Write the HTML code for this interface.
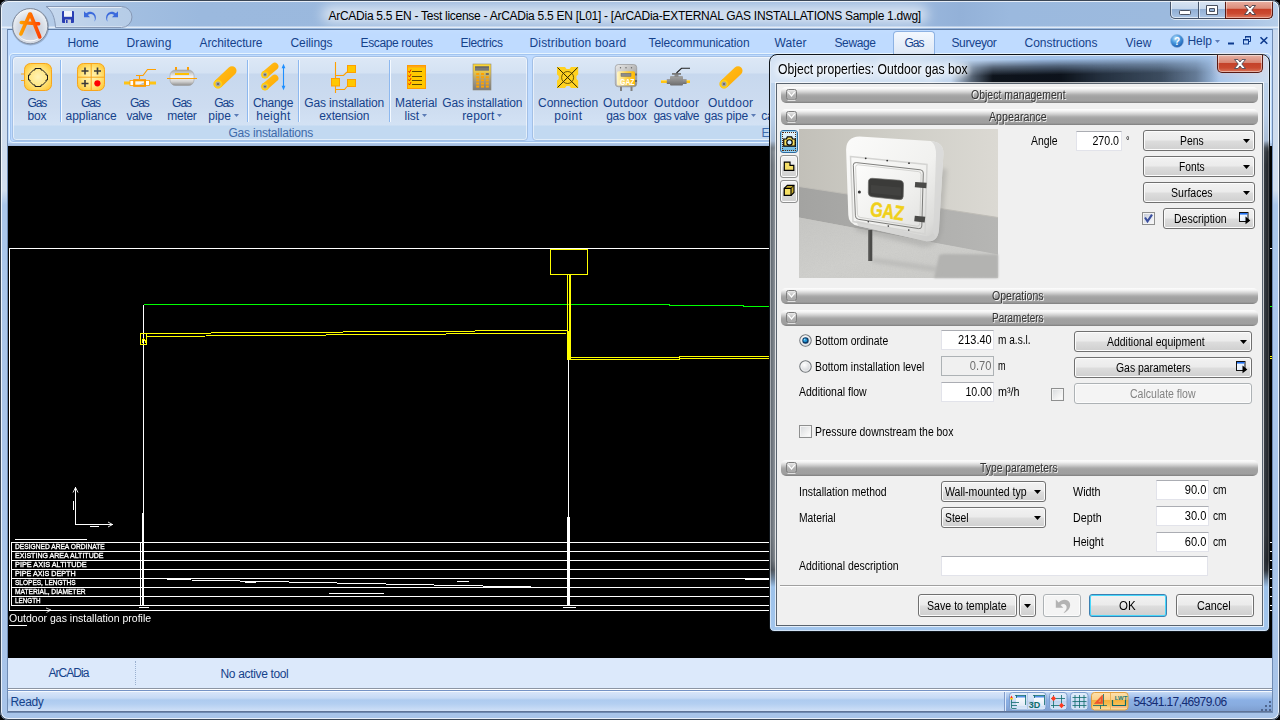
<!DOCTYPE html>
<html><head><meta charset="utf-8">
<style>
*{box-sizing:border-box;margin:0;padding:0}
html,body{width:1280px;height:720px;overflow:hidden}
body{position:relative;font-family:"Liberation Sans",sans-serif;font-size:12px;color:#15428b;background:linear-gradient(180deg,#c9d9ee 0,#d3dfef 190px,#aac6ea 205px,#a8c4e9 100%)}
.a{position:absolute}
.t{position:absolute;white-space:nowrap;line-height:14px;height:14px}
svg{position:absolute;overflow:visible}
#titlebar{left:0;top:0;width:1280px;height:30px;background:linear-gradient(180deg,rgba(255,255,255,0) 26px,rgba(232,240,250,.9) 27px,rgba(232,240,250,.9) 28px,rgba(255,255,255,0) 28px),linear-gradient(90deg,#c0d4ec 0,#b6cde9 45px,#a3bfe1 120px,#9bb9de 200px,#9ab8dd 560px,#9dbadf 900px,#93b1d8 960px,#9bb9de 1010px,#9cbade 1170px,#a9c3e4 1240px,#b7cfea 1280px)}
#tglow{left:322px;top:6px;width:606px;height:17px;background:rgba(255,255,255,.62);border-radius:9px;filter:blur(6px)}
#tabrow{left:8px;top:30px;width:1264px;height:25px;background:#bfdbff}
#ribbon{left:8px;top:55px;width:1264px;height:91px;background:#bfdbff}
.grp{position:absolute;top:56px;height:85px;border:1px solid #a3c0e6;border-radius:4px;background:linear-gradient(180deg,#dde8f6 0,#d4e2f3 16px,#c7d8ee 17px,#cddcf0 50px,#d3e2f4 68px,#c2d9f1 69px,#c2d9f1 100%);box-shadow:0 0 0 1px rgba(255,255,255,.55) inset}
.sep{position:absolute;top:60px;height:62px;width:2px;border-left:1px solid #8db8ef;border-right:1px solid #f4f9ff}
#draw{left:8px;top:146px;width:1264px;height:512px;background:#000}
#cmd{left:8px;top:658px;width:1264px;height:31px;background:#dce9fb}
#status{left:8px;top:690px;width:1264px;height:22px;background:linear-gradient(180deg,#7593c5 0,#7593c5 1px,#f4f9ff 1px,#f4f9ff 2px,#d7e5f9 2px,#c6daf5 8px,#aecbef 10px,#b4cff1 14px,#cfe0f7 21px,#5f7497 21px)}
#status2{left:1005px;top:692px;width:267px;height:19px;background:linear-gradient(180deg,#c6daf5 0,#a6c3ec 5px,#8bb0e5 8px,#88acdf 13px,#7f9fd0 19px);border-left:1px solid #dfeafa}
/* dialog */
#dlg{left:769px;top:54px;width:501px;height:578px;border:1px solid #0e141a;border-radius:8px 8px 5px 5px;background:linear-gradient(180deg,#c3d7ee 0,#b9cfe9 60px,#a9bdd6 86px,#5f6974 93px,#4a535d 110px,#4e5761 480px,#39414a 515px,#9dc2ea 532px,#a3c6ed 578px);box-shadow:0 0 0 1px rgba(255,255,255,.5) inset}
#dlgc{left:776px;top:83px;width:487px;height:543px;background:#f0f0f0;border:1px solid #59636e;box-shadow:0 0 0 1px rgba(255,255,255,.7)}
.bar{position:absolute;left:781px;width:477px;height:16px;border-radius:5px;background:linear-gradient(180deg,#fdfdfd 0,#f4f4f4 2px,#d2d2d2 5px,#aaaaaa 8px,#a1a1a1 10px,#9f9f9f 14px,#7e7e7e 16px)}
.bart{position:absolute;white-space:nowrap;line-height:14px;height:14px;font-size:12px;color:#333;text-shadow:1px 1px 0 #fff}
.btn{position:absolute;border:1px solid #707070;border-radius:3px;background:linear-gradient(180deg,#f2f2f2 0,#ebebeb 48%,#dddddd 52%,#cfcfcf 100%);box-shadow:0 0 0 1px #fcfcfc inset}
.inp{position:absolute;background:#fff;border:1px solid #e2e3ea;border-top-color:#abadb3}
.d{color:#000}
#dlgt{left:771px;top:56px;width:497px;height:27px;border-radius:6px 6px 0 0;background:linear-gradient(90deg,#d5e3f4 0,#d0e0f2 30%,#b9d0ec 40%,#a1c1e9 55%,#a3c3ea 88%,#c3d7ef 97%,#cddcf0 100%)}
#dlgt:after{content:"";position:absolute;left:0;top:0;width:100%;height:27px;background:linear-gradient(90deg,rgba(10,16,24,0) 180px,rgba(10,16,24,.55) 200px,rgba(8,13,20,.97) 222px,rgba(8,13,20,.97) 290px,rgba(22,32,44,.9) 330px,rgba(34,46,60,.8) 390px,rgba(50,64,82,.55) 425px,rgba(60,80,100,0) 448px);-webkit-mask-image:linear-gradient(179deg,transparent 0,transparent 22%,rgba(0,0,0,.55) 42%,#000 66%);mask-image:linear-gradient(179deg,transparent 0,transparent 22%,rgba(0,0,0,.55) 42%,#000 66%)}
</style></head><body>
<div id="titlebar" class="a"></div>
<div id="tabrow" class="a"></div>
<div class="a" style="left:0;top:0;width:1280px;height:720px;border:1px solid #3a4656;border-radius:8px;box-shadow:0 0 0 1px rgba(255,255,255,.75) inset,0 0 0 6px #000;pointer-events:none;z-index:50"></div>
<div class="a" style="left:7px;top:29px;width:1266px;height:684px;border:1px solid #6f8bb3;border-top-color:#5d7aa3;z-index:1"></div>
<svg style="left:40px;top:5px" width="96" height="24" viewBox="40 5 96 24"><path d="M46 6.5H121.5A10.5 10.5 0 0 1 121.5 27.5H55.5C55 18 52 10 46 6.5Z" fill="rgba(255,255,255,.22)" stroke="#8799b6"/><path d="M48.5 7.5H121.5" stroke="rgba(255,255,255,.6)" fill="none"/></svg>
<svg style="left:62px;top:11px" width="12" height="12" viewBox="0 0 12 12"><rect x="0" y="0" width="12" height="12" rx="1" fill="#2a3fb4"/><rect x="2" y="0" width="8" height="6" fill="#f2f4fa"/><rect x="2" y="5" width="8" height="1" fill="#c8d0e6"/><rect x="3" y="8.5" width="6" height="3.5" fill="#c9cfdd"/><rect x="4" y="9" width="1.6" height="3" fill="#2a3fb4"/></svg>
<svg style="left:83px;top:10px" width="14" height="13" viewBox="0 0 14 13"><path d="M1 1.2V7.2H7L4.9 5.1C7.4 3 11.3 4.2 11.8 8.2C12 9.8 11.6 11 11.2 11.8C13.3 9.6 13.6 5.6 11 3.2C8.6 1 5.2 1.2 3.1 3.3Z" fill="#3c6adc"/></svg>
<svg style="left:105px;top:10px" width="14" height="13" viewBox="0 0 14 13"><g transform="translate(14,0) scale(-1,1)"><path d="M1 1.2V7.2H7L4.9 5.1C7.4 3 11.3 4.2 11.8 8.2C12 9.8 11.6 11 11.2 11.8C13.3 9.6 13.6 5.6 11 3.2C8.6 1 5.2 1.2 3.1 3.3Z" fill="#3c6adc"/></g></svg>
<svg style="left:11px;top:7px;z-index:5" width="40" height="40" viewBox="0 0 40 40"><defs><radialGradient id="ob" cx=".5" cy=".62" r=".62"><stop offset="0" stop-color="#bfc7d5"/><stop offset=".55" stop-color="#d3d9e3"/><stop offset=".85" stop-color="#e9edf2"/><stop offset="1" stop-color="#f6f8fa"/></radialGradient><linearGradient id="oa" x1="0" y1="0" x2="1" y2="0"><stop offset="0" stop-color="#ffa000"/><stop offset="1" stop-color="#ff4200"/></linearGradient></defs><circle cx="19.500" cy="19.900" r="18.600" fill="rgba(60,75,100,.3)"/><circle cx="19.200" cy="19.200" r="17.600" fill="url(#ob)" stroke="#7f8a9c"/><path d="M6 27A15.500 15.500 0 0 0 32.400 27A17 17 0 0 1 6 27Z" fill="#fff" opacity=".85"/><path d="M18.800 7L9.900 27M19.400 7L28.800 30M10.300 15.500L27.600 16.800" stroke="url(#oa)" stroke-width="3.600" stroke-linecap="round" fill="none"/></svg>
<div id="ribbon" class="a"></div>
<div class="a" style="left:8px;top:143px;width:1264px;height:3px;background:linear-gradient(180deg,#b4cbeb,#9fb9de)"></div>
<div class="a" style="left:9px;top:53px;width:1262px;height:90px;border:1px solid #e6f4ff;border-radius:4px;box-shadow:0 0 0 1px rgba(141,178,227,.55) inset"></div>
<div id="draw" class="a"></div>
<div id="cmd" class="a"></div>
<div id="status" class="a"></div>
<div id="status2" class="a"></div>
<div id="tglow" class="a"></div>
<span class="t" style="left:328.5px;top:8.5px;font-size:12px;letter-spacing:-0.27px;color:#000;">ArCADia 5.5 EN - Test license - ArCADia 5.5 EN [L01] - [ArCADia-EXTERNAL GAS INSTALLATIONS Sample 1.dwg]</span>
<div class="a" style="left:893px;top:31px;width:42px;height:25px;border:1px solid #8db2e3;border-bottom:none;border-radius:4px 4px 0 0;background:linear-gradient(180deg,#f3f8fe,#dbe6f5)"></div>
<span class="t" style="left:67.5px;top:36.0px;font-size:12px;letter-spacing:-0.25px;">Home</span>
<span class="t" style="left:126.5px;top:36.0px;font-size:12px;letter-spacing:0.14px;">Drawing</span>
<span class="t" style="left:199.5px;top:36.0px;font-size:12px;letter-spacing:-0.09px;">Architecture</span>
<span class="t" style="left:290.5px;top:36.0px;font-size:12px;letter-spacing:-0.09px;">Ceilings</span>
<span class="t" style="left:360.5px;top:36.0px;font-size:12px;letter-spacing:-0.36px;">Escape routes</span>
<span class="t" style="left:460.5px;top:36.0px;font-size:12px;letter-spacing:-0.37px;">Electrics</span>
<span class="t" style="left:529.5px;top:36.0px;font-size:12px;letter-spacing:0.16px;">Distribution board</span>
<span class="t" style="left:648.5px;top:36.0px;font-size:12px;letter-spacing:-0.10px;">Telecommunication</span>
<span class="t" style="left:774.5px;top:36.0px;font-size:12px;letter-spacing:0.09px;">Water</span>
<span class="t" style="left:834.5px;top:36.0px;font-size:12px;letter-spacing:-0.39px;">Sewage</span>
<span class="t" style="left:904.5px;top:36.0px;font-size:12px;letter-spacing:-1.00px;">Gas</span>
<span class="t" style="left:951.5px;top:36.0px;font-size:12px;letter-spacing:-0.38px;">Surveyor</span>
<span class="t" style="left:1024.5px;top:36.0px;font-size:12px;letter-spacing:-0.03px;">Constructions</span>
<span class="t" style="left:1125.5px;top:36.0px;font-size:12px;letter-spacing:0.05px;">View</span>
<div class="grp" style="left:12px;width:516px"></div>
<div class="grp" style="left:532px;width:400px"></div>
<div class="sep" style="left:60px"></div>
<div class="sep" style="left:247px"></div>
<div class="sep" style="left:298px"></div>
<div class="sep" style="left:389px"></div>
<span class="t" style="left:228.5px;top:126.0px;font-size:12px;letter-spacing:-0.21px;color:#3e6aaa;">Gas installations</span>
<span class="t" style="left:27.5px;top:96.0px;font-size:12px;letter-spacing:-1.17px;">Gas</span>
<span class="t" style="left:27.5px;top:109.0px;font-size:12px;letter-spacing:-0.12px;">box</span>
<span class="t" style="left:81.0px;top:96.0px;font-size:12px;letter-spacing:-1.00px;">Gas</span>
<span class="t" style="left:65.5px;top:109.0px;font-size:12px;letter-spacing:-0.04px;">appliance</span>
<span class="t" style="left:129.9px;top:96.0px;font-size:12px;letter-spacing:-1.04px;">Gas</span>
<span class="t" style="left:126.5px;top:109.0px;font-size:12px;letter-spacing:-0.50px;">valve</span>
<span class="t" style="left:172.1px;top:96.0px;font-size:12px;letter-spacing:-1.00px;">Gas</span>
<span class="t" style="left:167.3px;top:109.0px;font-size:12px;letter-spacing:-0.29px;">meter</span>
<span class="t" style="left:214.2px;top:96.0px;font-size:12px;letter-spacing:-1.04px;">Gas</span>
<span class="t" style="left:208.2px;top:109.0px;font-size:12px;letter-spacing:0.03px;">pipe</span>
<span class="t" style="left:252.9px;top:96.0px;font-size:12px;letter-spacing:-0.32px;">Change</span>
<span class="t" style="left:256.2px;top:109.0px;font-size:12px;letter-spacing:0.27px;">height</span>
<span class="t" style="left:304.3px;top:96.0px;font-size:12px;letter-spacing:-0.14px;">Gas installation</span>
<span class="t" style="left:319.3px;top:109.0px;font-size:12px;letter-spacing:-0.17px;">extension</span>
<span class="t" style="left:395.1px;top:96.0px;font-size:12px;letter-spacing:-0.08px;">Material</span>
<span class="t" style="left:404.5px;top:109.0px;font-size:12px;letter-spacing:0.01px;">list</span>
<span class="t" style="left:442.2px;top:96.0px;font-size:12px;letter-spacing:-0.12px;">Gas installation</span>
<span class="t" style="left:462.2px;top:109.0px;font-size:12px;letter-spacing:0.16px;">report</span>
<span class="t" style="left:538.1px;top:96.0px;font-size:12px;letter-spacing:-0.08px;">Connection</span>
<span class="t" style="left:554.2px;top:109.0px;font-size:12px;letter-spacing:0.46px;">point</span>
<span class="t" style="left:603.1px;top:96.0px;font-size:12px;letter-spacing:0.26px;">Outdoor</span>
<span class="t" style="left:606.2px;top:109.0px;font-size:12px;letter-spacing:-0.25px;">gas box</span>
<span class="t" style="left:654.1px;top:96.0px;font-size:12px;letter-spacing:0.26px;">Outdoor</span>
<span class="t" style="left:653.5px;top:109.0px;font-size:12px;letter-spacing:-0.60px;">gas valve</span>
<span class="t" style="left:708.0px;top:96.0px;font-size:12px;letter-spacing:0.29px;">Outdoor</span>
<span class="t" style="left:704.2px;top:109.0px;font-size:12px;letter-spacing:-0.21px;">gas pipe</span>
<span class="t" style="left:761.3px;top:109.0px;font-size:12px;letter-spacing:-0.24px;">ca</span>
<span class="t" style="left:761.5px;top:126.0px;font-size:12px;color:#3e6aaa;">Ex</span>
<svg style="left:0;top:0" width="1272" height="660" viewBox="0 0 1272 660" shape-rendering="crispEdges" fill="none"><line x1="9" y1="248.5" x2="1272" y2="248.5" stroke="#fff" stroke-width="1"/><line x1="9.5" y1="248" x2="9.5" y2="611" stroke="#fff" stroke-width="1"/><line x1="9" y1="610.5" x2="1272" y2="610.5" stroke="#fff" stroke-width="1"/><polyline points="144,304.5 669,304.5 669,305.5 743,305.5 743,306.5 1272,306.5" stroke="#00ff00"/><line x1="143.5" y1="305" x2="143.5" y2="513" stroke="#fff" stroke-width="1"/><line x1="143" y1="513" x2="143" y2="606" stroke="#fff" stroke-width="2"/><line x1="140.5" y1="542" x2="140.5" y2="606" stroke="#fff" stroke-width="1"/><line x1="568.5" y1="360" x2="568.5" y2="517" stroke="#fff" stroke-width="1"/><line x1="568.5" y1="517" x2="568.5" y2="606" stroke="#fff" stroke-width="3"/><line x1="139" y1="607.5" x2="149" y2="607.5" stroke="#fff" stroke-width="1"/><line x1="563" y1="607.5" x2="576" y2="607.5" stroke="#fff" stroke-width="1"/><line x1="11" y1="542.5" x2="1272" y2="542.5" stroke="#fff" stroke-width="1"/><line x1="11" y1="551.5" x2="1272" y2="551.5" stroke="#fff" stroke-width="1"/><line x1="11" y1="560.5" x2="1272" y2="560.5" stroke="#fff" stroke-width="1"/><line x1="11" y1="569.5" x2="1272" y2="569.5" stroke="#fff" stroke-width="1"/><line x1="11" y1="578.5" x2="1272" y2="578.5" stroke="#fff" stroke-width="1"/><line x1="11" y1="587.5" x2="1272" y2="587.5" stroke="#fff" stroke-width="1"/><line x1="11" y1="596.5" x2="1272" y2="596.5" stroke="#fff" stroke-width="1"/><line x1="11" y1="605.5" x2="1272" y2="605.5" stroke="#fff" stroke-width="1"/><line x1="11.5" y1="542" x2="11.5" y2="606" stroke="#fff" stroke-width="1"/><line x1="15" y1="539.5" x2="87" y2="539.5" stroke="#fff" stroke-width="1"/><line x1="167" y1="579.5" x2="545" y2="587.3" stroke="#fff" stroke-width="1"/><line x1="245" y1="582.5" x2="256" y2="582.5" stroke="#fff" stroke-width="1"/><line x1="329" y1="593.5" x2="384" y2="593.5" stroke="#fff" stroke-width="1"/><line x1="457" y1="581.5" x2="469" y2="581.5" stroke="#fff" stroke-width="1"/><line x1="745" y1="579.5" x2="780" y2="579.5" stroke="#fff" stroke-width="1"/><line x1="75.5" y1="487" x2="75.5" y2="525" stroke="#fff" stroke-width="1"/><line x1="75" y1="524.5" x2="113" y2="524.5" stroke="#fff" stroke-width="1"/><path d="M73 492.5L75.5 487.5L78 492.5M108 522L112.5 524.5L108 527" stroke="#fff" stroke-width=".9" shape-rendering="auto"/><line x1="73.5" y1="501" x2="73.5" y2="510" stroke="#fff" stroke-width="1"/><line x1="90" y1="526.5" x2="99" y2="526.5" stroke="#fff" stroke-width="1"/><path d="M46 608L51 610L46.500 612.500" stroke="#fff" stroke-width=".8" shape-rendering="auto"/><line x1="9" y1="625.5" x2="27" y2="625.5" stroke="#fff" stroke-width="1"/><line x1="146" y1="333.5" x2="568" y2="330.3" stroke="#ffff00" stroke-width="1"/><line x1="146" y1="336.5" x2="568" y2="333.0" stroke="#ffff00" stroke-width="1"/><rect x="140.5" y="333.5" width="6" height="11" stroke="#ffff00"/><path d="M142 343V340.5L143.5 339L145 340.5V343" stroke="#ffff00"/><rect x="550.5" y="249.5" width="37" height="25" stroke="#ffff00"/><line x1="567.5" y1="275" x2="567.5" y2="331" stroke="#ffff00" stroke-width="1"/><line x1="569.5" y1="275" x2="569.5" y2="360" stroke="#ffff00" stroke-width="2"/><line x1="568" y1="331" x2="568" y2="360" stroke="#ffff00" stroke-width="3"/><polyline points="569,357.5 679,357.5 679,356.5 1272,356.5" stroke="#ffff00"/><polyline points="569,359.5 679,359.5 679,358.5 1272,358.5" stroke="#ffff00"/></svg>
<span class="t" style="left:14.9px;transform-origin:left center;top:540.3px;font-size:8px;color:#fff;transform:scaleX(0.831);-webkit-text-stroke:.35px #fff;">DESIGNED AREA ORDINATE</span>
<span class="t" style="left:14.9px;transform-origin:left center;top:549.3px;font-size:8px;color:#fff;transform:scaleX(0.883);-webkit-text-stroke:.35px #fff;">EXISTING AREA ALTITUDE</span>
<span class="t" style="left:14.9px;transform-origin:left center;top:558.3px;font-size:8px;color:#fff;transform:scaleX(0.917);-webkit-text-stroke:.35px #fff;">PIPE AXIS ALTITUDE</span>
<span class="t" style="left:14.9px;transform-origin:left center;top:567.3px;font-size:8px;color:#fff;transform:scaleX(0.897);-webkit-text-stroke:.35px #fff;">PIPE AXIS DEPTH</span>
<span class="t" style="left:14.9px;transform-origin:left center;top:576.3px;font-size:8px;color:#fff;transform:scaleX(0.816);-webkit-text-stroke:.35px #fff;">SLOPES, LENGTHS</span>
<span class="t" style="left:14.9px;transform-origin:left center;top:585.3px;font-size:8px;color:#fff;transform:scaleX(0.829);-webkit-text-stroke:.35px #fff;">MATERIAL, DIAMETER</span>
<span class="t" style="left:14.9px;transform-origin:left center;top:594.3px;font-size:8px;color:#fff;transform:scaleX(0.789);-webkit-text-stroke:.35px #fff;">LENGTH</span>
<span class="t" style="left:9.4px;transform-origin:left center;top:611.5px;font-size:10px;color:#fff;transform:scaleX(1.052);">Outdoor gas installation profile</span>
<svg style="left:0;top:0" width="770" height="146" viewBox="0 0 770 146"><defs>
<radialGradient id="yb" cx=".5" cy=".5" r=".6"><stop offset="0" stop-color="#fff3b5"/><stop offset=".55" stop-color="#ffe683"/><stop offset="1" stop-color="#ffc938"/></radialGradient>
<linearGradient id="pg" x1="0" y1="0" x2="1" y2="1"><stop offset="0" stop-color="#ffd84a"/><stop offset=".35" stop-color="#ffb713"/><stop offset="1" stop-color="#ffa800"/></linearGradient>
<linearGradient id="mt" x1="0" y1="0" x2="0" y2="1"><stop offset="0" stop-color="#a9a9a9"/><stop offset=".45" stop-color="#f6f6f6"/><stop offset=".75" stop-color="#d0d0d0"/><stop offset="1" stop-color="#8e8e8e"/></linearGradient>
<linearGradient id="calc" x1="0" y1="0" x2="0" y2="1"><stop offset="0" stop-color="#ffd830"/><stop offset=".3" stop-color="#e9c648"/><stop offset=".65" stop-color="#a19a84"/><stop offset="1" stop-color="#7b7b7b"/></linearGradient>
<linearGradient id="door" x1="0" y1="0" x2="1" y2="0"><stop offset="0" stop-color="#fff6c8"/><stop offset=".5" stop-color="#ffd44a"/><stop offset="1" stop-color="#ffb800"/></linearGradient>
<linearGradient id="gbx" x1="0" y1="0" x2="1" y2="1"><stop offset="0" stop-color="#e9e9e9"/><stop offset=".5" stop-color="#bdbdbd"/><stop offset="1" stop-color="#8a8a8a"/></linearGradient>
<linearGradient id="vg" x1="0" y1="0" x2="0" y2="1"><stop offset="0" stop-color="#a2a2a2"/><stop offset=".5" stop-color="#8a8a8a"/><stop offset="1" stop-color="#6c6c6c"/></linearGradient>
<g id="pipe"><path d="M-3.2 -3.2L10.8 -16.5A4.5 4.5 0 0 1 17.2 -10.1L3.2 3.2Z" fill="url(#pg)"/><circle cx="0" cy="0" r="4.3" fill="#ffd21a" stroke="#ffbf00" stroke-width=".6"/><circle cx="0" cy="0" r="2.5" fill="#a3a3a3"/><circle cx="0" cy="0" r="1" fill="#5e5e5e"/></g>
<g id="spipe"><path d="M-2.6 -2.6L7.4 -11.2A3.7 3.7 0 0 1 12.6 -6L2.6 2.6Z" fill="url(#pg)"/><circle cx="0" cy="0" r="3.6" fill="#ffd21a" stroke="#ffbf00" stroke-width=".6"/><circle cx="0" cy="0" r="2.1" fill="#a3a3a3"/><circle cx="0" cy="0" r=".9" fill="#5e5e5e"/></g>
</defs>
<!-- gas box -->
<path d="M21 74H24M21 80.5H24" stroke="#f5a623"/>
<rect x="24.5" y="63.5" width="27" height="27" rx="6" fill="url(#yb)" stroke="#f7a51c"/>
<path d="M35 68.5H41V70H42.5L46 73.5V75H47.5V80H46V81.5L42.5 85H41V86.5H35V85H33.5L30 81.5V80H28.5V75H30V73.5L33.500 70H35Z" fill="none" stroke="#1c1c1c" stroke-width="1"/>
<!-- gas appliance -->
<rect x="77.500" y="63.5" width="27" height="27" rx="6" fill="url(#yb)" stroke="#f7a51c"/>
<path d="M91.200 64V90M78 77.200H104" stroke="#f7a51c"/>
<path d="M81.500 71H88.500M85 67.500V74.500M94 71H101M97.500 67.500V74.500M81.500 83.500H88.500M85 80V87" stroke="#3a3a3a" stroke-width="1.600"/>
<circle cx="97.400" cy="83.300" r="3.100" fill="#ff0000"/>
<!-- gas valve -->
<rect x="124" y="81.500" width="32" height="3" fill="#ffc414"/>
<rect x="130" y="80.500" width="19.500" height="5" fill="#fff" stroke="#ff9e00" stroke-width=".8"/>
<rect x="133.700" y="79.700" width="11.800" height="6.600" fill="#ffa000" stroke="#ff9800"/>
<rect x="135.300" y="81.300" width="8.700" height="3.400" fill="#f4f4f4"/><path d="M139 84.700H144V82.500Z" fill="#bbb"/>
<path d="M139.500 79V75.500M136 75.500H143L147.500 69.500H156" stroke="#ffa000" fill="none" stroke-width="1.100"/>
<!-- gas meter -->
<rect x="175" y="67" width="2" height="4" fill="#ffa000"/><rect x="187" y="67" width="2" height="4" fill="#ffa000"/>
<rect x="170" y="70" width="24" height="15.500" rx="5.500" fill="url(#mt)" stroke="#9a9a9a" stroke-width=".5"/>
<rect x="175" y="73" width="14" height="2" fill="#ffc000"/>
<path d="M167 78.500H197" stroke="#ffa000" stroke-width="1"/>
<!-- gas pipe -->
<use href="#pipe" x="218" y="84"/>
<!-- change height -->
<use href="#spipe" x="265" y="74.700"/><use href="#spipe" x="265" y="86.600"/>
<path d="M283.500 66V88" stroke="#1e8fff" stroke-width="1.100"/><path d="M283.500 63.800L281.600 68.200H285.400ZM283.500 90.200L281.600 85.800H285.400Z" fill="#1e8fff"/>
<!-- extension -->
<path d="M335.500 62V93M335.500 75.500H343.500L347 72M335.500 89.500H344.500L347 86.500" stroke="#ffa000" fill="none" stroke-width="1.100"/>
<rect x="331.500" y="78.500" width="8" height="7.500" fill="#ffc800" stroke="#ffa000"/>
<rect x="347.500" y="65.500" width="8" height="7" fill="#ffc800" stroke="#ffa000"/>
<rect x="347.500" y="79.500" width="8" height="7" fill="#ffc800" stroke="#ffa000"/>
<!-- material list -->
<rect x="407.500" y="65.500" width="18" height="23" fill="#ffc800" stroke="#ff9c00"/>
<rect x="408" y="66" width="17" height="1.500" fill="#ffa41a"/>
<path d="M412 71.500H422M412 76.500H422M412 80.500H422M412 84.500H422" stroke="#5e4a00" stroke-width="1"/>
<path d="M408.500 71L409.500 72.500L411 69.500M408.500 75.500L409.500 77L411 74M408.500 79.500L409.500 81L411 78M408.500 83.500L409.500 85L411 82" stroke="#e81c00" fill="none" stroke-width=".9"/>
<!-- calculator -->
<rect x="473" y="64" width="18" height="26" fill="url(#calc)" stroke="#8f8a76" stroke-width=".6"/>
<rect x="475" y="66.500" width="14" height="4.200" fill="#787878"/><rect x="475" y="66.500" width="14" height="1" fill="#5c5c5c"/>
<rect x="476.2" y="73.0" width="3" height="2" fill="#ffa200"/><rect x="481.0" y="73.0" width="3" height="2" fill="#ffa200"/><rect x="485.8" y="73.0" width="3" height="2" fill="#6e6e6e"/><rect x="476.2" y="76.3" width="3" height="2" fill="#ffa200"/><rect x="481.0" y="76.3" width="3" height="2" fill="#ffa200"/><rect x="485.8" y="76.3" width="3" height="2" fill="#ffa200"/><rect x="476.2" y="79.4" width="3" height="2" fill="#ffa200"/><rect x="481.0" y="79.4" width="3" height="2" fill="#ffa200"/><rect x="485.8" y="79.4" width="3" height="2" fill="#ffa200"/><rect x="476.2" y="82.5" width="3" height="2" fill="#ffa200"/><rect x="481.0" y="82.5" width="3" height="2" fill="#ffa200"/><rect x="485.8" y="82.5" width="3" height="2" fill="#ffa200"/><rect x="476.2" y="85.6" width="3" height="2" fill="#ffa200"/><rect x="481.0" y="85.6" width="3" height="2" fill="#ffa200"/><rect x="485.8" y="85.6" width="3" height="2" fill="#ffa200"/>
<!-- connection point -->
<path d="M557 67H565L566.500 69H569.500L571 67H578.200V74.500L576.500 76V79L578.200 80.500V88H571L569.500 86H566.500L565 88H557V80.500L558.700 79V76L557 74.500Z" fill="#ffd220"/>
<path d="M557.500 67.500L577.700 87.500M577.700 67.500L557.500 87.500" stroke="#2b2300" stroke-width="1"/><circle cx="567.600" cy="77.500" r="6" fill="none" stroke="#4a3b00" stroke-width=".8"/>
<!-- outdoor gas box -->
<rect x="620" y="86" width="2" height="5" fill="#808080"/><rect x="630.500" y="86" width="2" height="5" fill="#808080"/>
<rect x="615.300" y="64.500" width="21.400" height="22.300" rx="3" fill="url(#gbx)" stroke="#8c8c8c" stroke-width=".6"/>
<circle cx="620.500" cy="67.700" r=".7" fill="#666"/><circle cx="626" cy="67.700" r=".7" fill="#666"/><circle cx="631.500" cy="67.700" r=".7" fill="#666"/>
<rect x="617" y="71.200" width="18" height="14.200" rx="1.500" fill="url(#door)"/>
<rect x="621" y="73.300" width="10" height="3" fill="#8c8c8c" stroke="#666" stroke-width=".5"/>
<rect x="635" y="73.500" width="2" height="2" fill="#666"/><rect x="635" y="80" width="2" height="2" fill="#666"/>
<text x="627.300" y="84.600" font-family="Liberation Sans" font-weight="bold" font-size="8.5" fill="#fff" text-anchor="middle" textLength="14.500" lengthAdjust="spacingAndGlyphs">GAZ</text>
<!-- outdoor gas valve -->
<rect x="661" y="80" width="29" height="3" fill="#ffc414"/><rect x="661" y="80" width="29" height="1" fill="#ffdc5a"/>
<rect x="666.800" y="79" width="19.800" height="5" fill="url(#vg)"/>
<rect x="670" y="76" width="13" height="9.500" rx="1" fill="url(#vg)"/>
<rect x="674.500" y="74" width="4" height="3" fill="#8a8a8a"/><rect x="672" y="73" width="9" height="1.800" fill="#7a7a7a"/>
<path d="M676.500 73L681.500 68.300H690" stroke="#222" fill="none" stroke-width="1.100"/>
<!-- outdoor gas pipe -->
<use href="#pipe" x="724" y="84"/>
</svg>
<svg style="left:234.3px;top:114.3px" width="5" height="3"><path d="M0 0H5L2.500 3Z" fill="#5b7bb5"/></svg>
<svg style="left:422.3px;top:114.3px" width="5" height="3"><path d="M0 0H5L2.500 3Z" fill="#5b7bb5"/></svg>
<svg style="left:497.3px;top:114.3px" width="5" height="3"><path d="M0 0H5L2.500 3Z" fill="#5b7bb5"/></svg>
<svg style="left:751.0px;top:114.3px" width="5" height="3"><path d="M0 0H5L2.500 3Z" fill="#5b7bb5"/></svg>
<div class="a" style="left:1170px;top:0;width:103px;height:19px;border:1px solid #46546a;border-top:none;border-radius:0 0 5px 5px;background:linear-gradient(180deg,rgba(255,255,255,.62) 0,rgba(255,255,255,.42) 48%,rgba(120,150,190,.35) 52%,rgba(190,210,235,.35) 100%);box-shadow:0 0 0 1px rgba(255,255,255,.6) inset,0 1px 0 rgba(255,255,255,.7)"></div>
<div class="a" style="left:1225px;top:0;width:48px;height:19px;border:1px solid #5a1a12;border-top:none;border-radius:0 0 5px 0;background:linear-gradient(180deg,#ecb5a8 0,#dc8d7b 46%,#c63f27 52%,#cb4a30 75%,#dc7a60 100%);box-shadow:0 0 0 1px rgba(255,255,255,.4) inset"></div>
<div class="a" style="left:1198px;top:0;width:1px;height:18px;background:#46546a;box-shadow:1px 0 0 rgba(255,255,255,.6)"></div>
<svg style="left:1179px;top:10px" width="12" height="5"><rect x=".5" y=".5" width="11" height="4" rx=".8" fill="#fff" stroke="#4a5160"/></svg>
<svg style="left:1206px;top:5px" width="12" height="10" viewBox="0 0 12 10"><path d="M.5 .5H11.500V9.500H.5ZM3.500 3.500V6.500H8.500V3.500Z" fill="#fff" fill-rule="evenodd" stroke="#4a5160"/></svg>
<svg style="left:1243px;top:4px" width="14" height="12" viewBox="0 0 14 12"><path d="M1.500 1.500H5L7 4L9 1.500H12.500L8.800 6L12.500 10.500H9L7 8L5 10.500H1.500L5.200 6Z" fill="#fff" stroke="#45404a" stroke-width=".9" stroke-linejoin="round"/></svg>
<svg style="left:1170px;top:34px" width="14" height="14" viewBox="0 0 14 14"><defs><radialGradient id="hs" cx=".4" cy=".3" r=".75"><stop offset="0" stop-color="#bfe3fb"/><stop offset=".45" stop-color="#4a9be0"/><stop offset="1" stop-color="#1452a8"/></radialGradient></defs><circle cx="7" cy="7" r="6.500" fill="url(#hs)" stroke="#8fb2dc" stroke-width=".6"/><text x="7" y="10.600" font-family="Liberation Sans" font-weight="bold" font-size="10" fill="#fff" text-anchor="middle">?</text></svg>
<svg style="left:1215px;top:39.500px" width="5" height="3"><path d="M0 0H5L2.500 3Z" fill="#5b7bb5"/></svg>
<svg style="left:1228px;top:35px" width="41" height="11" viewBox="1228 35 41 11"><rect x="1228" y="42.500" width="6" height="2" fill="#0d3a8e"/><path d="M1245.500 36.500H1250.500V41.500H1249M1245.500 36.500V38.500" stroke="#0d3a8e" fill="none"/><rect x="1245" y="36" width="6" height="1.500" fill="#0d3a8e"/><rect x="1243.500" y="39.500" width="5" height="4.500" fill="none" stroke="#0d3a8e"/><rect x="1243" y="39" width="6" height="1.500" fill="#0d3a8e"/><path d="M1260.500 37.200L1267.300 43.800M1267.300 37.200L1260.500 43.800" stroke="#0d3a8e" stroke-width="1.600"/></svg>
<span class="t" style="left:1187.5px;top:34.0px;font-size:12px;letter-spacing:-0.07px;">Help</span>
<div id="dlg" class="a"></div>
<div class="a" style="left:771px;top:140px;width:5px;height:440px;background:linear-gradient(90deg,rgba(255,255,255,.12),rgba(255,255,255,.42));-webkit-mask-image:linear-gradient(180deg,transparent 0,#000 12px,#000 420px,transparent 440px)"></div>
<div class="a" style="left:1264px;top:140px;width:5px;height:440px;background:linear-gradient(90deg,rgba(0,0,0,.25),rgba(0,0,0,.6));-webkit-mask-image:linear-gradient(180deg,transparent 0,#000 12px,#000 420px,transparent 440px)"></div>
<div id="dlgt" class="a"></div>
<div id="dlgc" class="a"></div>
<div class="a" style="left:1217px;top:55px;width:46px;height:18px;border:1px solid #5a1a12;border-top:none;border-radius:0 0 5px 5px;background:linear-gradient(180deg,#e7b2a6 0,#d98673 45%,#c4422a 50%,#c9492f 75%,#d9765c 100%);box-shadow:0 0 0 1px rgba(255,255,255,.45) inset,0 0 6px 1px rgba(255,200,190,.35)"></div>
<svg style="left:1233px;top:58px" width="14" height="12" viewBox="0 0 14 12"><path d="M1.500 1.500H5L7 4L9 1.500H12.500L8.800 6L12.500 10.500H9L7 8L5 10.500H1.500L5.200 6Z" fill="#fff" stroke="#4d4d5a" stroke-width=".9" stroke-linejoin="round"/></svg>
<span class="t" style="left:777.9px;transform-origin:left center;top:62.0px;font-size:14px;color:#000;transform:scaleX(0.870);text-shadow:0 0 7px #fff,0 0 7px #fff,0 0 10px #fff,0 0 12px #fff;">Object properties: Outdoor gas box</span>
<div class="bar" style="top:87px"></div>
<svg style="left:786px;top:89px" width="11" height="12" viewBox="0 0 11 12"><rect x=".5" y=".5" width="10" height="10" rx="2" fill="rgba(255,255,255,.12)" stroke="#7c7c7c"/><path d="M1.500 11.300H9.500" stroke="#f2f2f2" stroke-width="1"/><path d="M2.300 3.200L5.500 7L8.700 3.200" fill="none" stroke="#fff" stroke-width="1.300"/></svg>
<span class="t" style="left:970.9px;transform-origin:left center;top:87.8px;font-size:12px;color:#333;transform:scaleX(0.875);text-shadow:1px 1px 0 rgba(255,255,255,.9);">Object management</span>
<div class="bar" style="top:109px"></div>
<svg style="left:786px;top:111px" width="11" height="12" viewBox="0 0 11 12"><rect x=".5" y=".5" width="10" height="10" rx="2" fill="rgba(255,255,255,.12)" stroke="#7c7c7c"/><path d="M1.500 11.300H9.500" stroke="#f2f2f2" stroke-width="1"/><path d="M2.300 3.200L5.500 7L8.700 3.200" fill="none" stroke="#fff" stroke-width="1.300"/></svg>
<span class="t" style="left:988.9px;transform-origin:left center;top:109.8px;font-size:12px;color:#333;transform:scaleX(0.890);text-shadow:1px 1px 0 rgba(255,255,255,.9);">Appearance</span>
<div class="bar" style="top:288px"></div>
<svg style="left:786px;top:290px" width="11" height="12" viewBox="0 0 11 12"><rect x=".5" y=".5" width="10" height="10" rx="2" fill="rgba(255,255,255,.12)" stroke="#7c7c7c"/><path d="M1.500 11.300H9.500" stroke="#f2f2f2" stroke-width="1"/><path d="M2.300 3.200L5.500 7L8.700 3.200" fill="none" stroke="#fff" stroke-width="1.300"/></svg>
<span class="t" style="left:991.9px;transform-origin:left center;top:288.8px;font-size:12px;color:#333;transform:scaleX(0.879);text-shadow:1px 1px 0 rgba(255,255,255,.9);">Operations</span>
<div class="bar" style="top:310px"></div>
<svg style="left:786px;top:312px" width="11" height="12" viewBox="0 0 11 12"><rect x=".5" y=".5" width="10" height="10" rx="2" fill="rgba(255,255,255,.12)" stroke="#7c7c7c"/><path d="M1.500 11.300H9.500" stroke="#f2f2f2" stroke-width="1"/><path d="M2.300 3.200L5.500 7L8.700 3.200" fill="none" stroke="#fff" stroke-width="1.300"/></svg>
<span class="t" style="left:991.9px;transform-origin:left center;top:310.8px;font-size:12px;color:#333;transform:scaleX(0.832);text-shadow:1px 1px 0 rgba(255,255,255,.9);">Parameters</span>
<div class="bar" style="top:460px"></div>
<svg style="left:786px;top:462px" width="11" height="12" viewBox="0 0 11 12"><rect x=".5" y=".5" width="10" height="10" rx="2" fill="rgba(255,255,255,.12)" stroke="#7c7c7c"/><path d="M1.500 11.300H9.500" stroke="#f2f2f2" stroke-width="1"/><path d="M2.300 3.200L5.500 7L8.700 3.200" fill="none" stroke="#fff" stroke-width="1.300"/></svg>
<span class="t" style="left:979.9px;transform-origin:left center;top:460.8px;font-size:12px;color:#333;transform:scaleX(0.862);text-shadow:1px 1px 0 rgba(255,255,255,.9);">Type parameters</span>
<svg style="left:799px;top:129px" width="199" height="149" viewBox="0 0 199 149"><defs>
<linearGradient id="wl" x1="0" y1="0" x2="1" y2="0"><stop offset="0" stop-color="#c2c0b9"/><stop offset=".45" stop-color="#cecdc6"/><stop offset="1" stop-color="#dbd9d3"/></linearGradient>
<linearGradient id="bd" x1="0" y1="0" x2="1" y2="0"><stop offset="0" stop-color="#a3a3a1"/><stop offset=".5" stop-color="#adadab"/><stop offset="1" stop-color="#b6b6b4"/></linearGradient>
<linearGradient id="fl" x1="0" y1="0" x2="1" y2="1"><stop offset="0" stop-color="#c6c6c3"/><stop offset=".5" stop-color="#cfcfcc"/><stop offset="1" stop-color="#c9c9c6"/></linearGradient>
<linearGradient id="bx" x1="0" y1="0" x2="1" y2="1"><stop offset="0" stop-color="#fbfbfa"/><stop offset=".55" stop-color="#f1f1ef"/><stop offset=".85" stop-color="#dcdcda"/><stop offset="1" stop-color="#c4c4c2"/></linearGradient>
<linearGradient id="dr" x1="0" y1="0" x2="1" y2="1"><stop offset="0" stop-color="#fdfdfc"/><stop offset=".6" stop-color="#f0f0ee"/><stop offset="1" stop-color="#e2e2e0"/></linearGradient>
<filter id="bl1" x="-20%" y="-20%" width="140%" height="140%"><feGaussianBlur stdDeviation="1.200"/></filter>
<filter id="bl2" x="-20%" y="-50%" width="140%" height="200%"><feGaussianBlur stdDeviation="2"/></filter>
<filter id="nz" x="0" y="0" width="100%" height="100%"><feTurbulence type="fractalNoise" baseFrequency=".9" numOctaves="2" seed="3" result="n"/><feColorMatrix in="n" type="matrix" values="0 0 0 0 .5  0 0 0 0 .5  0 0 0 0 .5  .5 .5 0 0 -.38"/><feComposite in2="SourceGraphic" operator="in"/></filter>
</defs>
<rect width="199" height="149" fill="url(#wl)"/>
<path d="M0 57.5L199 88.500V126L0 88.500Z" fill="url(#bd)"/>
<path d="M0 88.500L199 125.500V149H0Z" fill="url(#fl)"/>
<path d="M0 88.500L199 125.500V149H0Z" fill="#8a8a88" filter="url(#nz)" opacity=".55"/>
<path d="M0 57.5L199 88.500" stroke="#bfbdb7" stroke-width="1.200" fill="none"/>
<path d="M140 126.500Q141 124.800 146 125L199 125.500V149H135Z" fill="#b3b3b1" filter="url(#bl1)"/>
<path d="M73 131L139 140.500" stroke="#b5b5b3" stroke-width="3.500" filter="url(#bl2)" fill="none"/>
<path d="M52 30Q50 92 58 102L124 118Q140 118 143 100L148 40Z" fill="#8f8f8d" opacity=".35" filter="url(#bl2)"/>
<rect x="69" y="101" width="4.300" height="31" fill="#4b4b49"/><rect x="69" y="101" width="1.300" height="31" fill="#6e6e6c"/>
<path d="M47.100 20.400Q47.500 8 60.400 7.600L131.600 12Q144.800 13 144.400 24.900L140 100.400Q139 113.500 127.100 112.200L59.300 97.100Q49.500 95 49.300 86Z" fill="url(#bx)"/>
<path d="M131.600 12Q144.800 13 144.400 24.900L140 100.400Q139 113.500 127.100 112.200L126 111Q134 109 134.500 99L137 27Q137.500 15 131.600 12Z" fill="#d6d6d4" opacity=".8"/><path d="M59.300 97.100L127.100 112.200Q133 112.500 136.500 108L134 104Q131 108 126 107L57 91.500Z" fill="#cfcfcd" opacity=".7"/><path d="M51.500 27.500L128 35.500L126 105L54 92.500Z" fill="none" stroke="#d4d4d2" stroke-width="1.500"/>
<path d="M57.200 33.600L121.400 40.800Q124.400 41.200 124.300 44.100L122.800 97Q122.600 100.200 119.700 99.600L59.400 90.300Q56.500 89.800 56.400 86.800L54.300 36.300Q54.200 33.300 57.200 33.600Z" fill="url(#dr)" stroke="#5f5f5d" stroke-width=".8"/>
<path d="M59.200 35.800L119.400 42.600Q122.200 43 122.100 45.500L120.800 95Q120.600 97.600 118 97.200L61.200 88.400Q58.600 88 58.500 85.500L56.600 38.200Q56.500 35.500 59.200 35.800Z" fill="none" stroke="#bdbdbb" stroke-width=".6"/>
<g fill="#333"><circle cx="66.700" cy="29.300" r=".9"/><circle cx="88.200" cy="31.600" r=".9"/><circle cx="110" cy="34.200" r=".9"/><circle cx="69.300" cy="92.700" r=".8"/><circle cx="89.300" cy="97.100" r=".8"/><circle cx="109.800" cy="101.100" r=".8"/><circle cx="60.400" cy="63.100" r="1.500"/></g>
<path d="M73.500 49.300L100.500 51.300Q104.600 51.700 104.500 55.700L104.200 67.500Q104 71 100.200 70.700L73 67.800Q69.300 67.400 69.300 63.800L69.400 53Q69.500 49 73.500 49.300Z" fill="#3b3b39" stroke="#6b6b69" stroke-width=".7"/>
<path d="M72 56L102 58.500V67L72 64Z" fill="#4a4a48" opacity=".5"/>
<rect x="116" y="53.300" width="11.500" height="5.400" fill="#4a4a48" transform="rotate(4 121 56)"/>
<rect x="115.500" y="87.200" width="10.500" height="5.600" fill="#4a4a48" transform="rotate(6 120 90)"/>
<text x="70.400" y="86.800" font-family="Liberation Sans" font-weight="bold" font-size="20.500" fill="#f0d01a" stroke="#f0d01a" stroke-width=".5" textLength="34" lengthAdjust="spacingAndGlyphs" transform="rotate(8 70.400 86.800)">GAZ</text>
</svg>
<div class="btn" style="left:780px;top:130px;width:18px;height:23px;border-color:#2c6a9e;background:linear-gradient(180deg,#e4f4fc 0,#cfeaf9 62%,#8fcdee 66%,#62b1dc 100%);box-shadow:0 0 0 1px #9fd5f3 inset"></div>
<div class="a" style="left:782px;top:132px;width:14px;height:19px;border:1px dotted #5a2a10"></div>
<svg style="left:782.500px;top:135.500px" width="13" height="11" viewBox="0 0 12 10"><path d="M.7 2.700H3.200L4 .8H8L8.800 2.700H11.300V9.200H.7Z" fill="#f6de5e" stroke="#000" stroke-width="1.100"/><circle cx="6" cy="5.900" r="2.500" fill="#cfeeff" stroke="#000" stroke-width="1.100"/></svg>
<div class="btn" style="left:780px;top:155px;width:18px;height:23px;border-color:#8e8f8f"></div>
<svg style="left:783px;top:161px" width="12" height="11" viewBox="0 0 12 11"><path d="M1.300 1.100H7V4.400H10.800V9.400H1.300Z" fill="#f4de68" stroke="#000" stroke-width="1.200"/></svg>
<div class="btn" style="left:780px;top:180px;width:18px;height:23px;border-color:#8e8f8f"></div>
<svg style="left:783px;top:184px" width="12" height="13" viewBox="0 0 12 13"><path d="M1.300 4.400L4.300 1.400H11V8.400L8 11.400H1.300Z" fill="#c9ae2e" stroke="#000" stroke-width="1.100"/><path d="M1.300 4.400H8V11.400H1.300Z" fill="#f6e064" stroke="#000" stroke-width="1.100"/><path d="M8 4.400L11 1.400" stroke="#000" stroke-width="1"/></svg>
<span class="t" style="left:1030.9px;transform-origin:left center;top:134.0px;font-size:12px;color:#000;transform:scaleX(0.867);">Angle</span>
<div class="inp" style="left:1076px;top:131px;width:46px;height:20px"></div>
<span class="t" style="right:161.2px;transform-origin:right center;top:134.0px;font-size:12px;color:#000;transform:scaleX(0.886);">270.0</span>
<span class="t" style="left:1125.9px;transform-origin:left center;top:134.0px;font-size:12px;color:#000;transform:scaleX(0.750);">°</span>
<div class="btn" style="left:1143px;top:130px;width:112px;height:21px;"></div>
<span class="t" style="left:1179.9px;transform-origin:left center;top:134.0px;font-size:12px;color:#000;transform:scaleX(0.863);">Pens</span>
<svg style="left:1242.5px;top:139.0px" width="7" height="4"><path d="M0 0H7L3.5 4Z" fill="#000"/></svg>
<div class="btn" style="left:1143px;top:156px;width:112px;height:21px;"></div>
<span class="t" style="left:1178.9px;transform-origin:left center;top:160.0px;font-size:12px;color:#000;transform:scaleX(0.853);">Fonts</span>
<svg style="left:1242.5px;top:165.0px" width="7" height="4"><path d="M0 0H7L3.5 4Z" fill="#000"/></svg>
<div class="btn" style="left:1143px;top:182px;width:112px;height:21px;"></div>
<span class="t" style="left:1170.9px;transform-origin:left center;top:186.0px;font-size:12px;color:#000;transform:scaleX(0.878);">Surfaces</span>
<svg style="left:1242.5px;top:191.0px" width="7" height="4"><path d="M0 0H7L3.5 4Z" fill="#000"/></svg>
<div class="btn" style="left:1163px;top:208px;width:92px;height:21px;"></div>
<span class="t" style="left:1173.9px;transform-origin:left center;top:212.0px;font-size:12px;color:#000;transform:scaleX(0.876);">Description</span>
<div class="a" style="left:1142px;top:212px;width:13px;height:13px;border:1px solid #8e8f8f;background:linear-gradient(135deg,#c3c8d6,#e4e7ee 55%,#fbfbfd);box-shadow:0 0 0 1px #f4f4f4 inset"></div>
<svg style="left:1144px;top:214px" width="9" height="9" viewBox="0 0 9 9"><path d="M1 3.500L3.500 7.300L8 .6" fill="none" stroke="#3a4f9e" stroke-width="2.100"/></svg>
<svg style="left:1239px;top:212px" width="12" height="13" viewBox="0 0 12 13"><defs><linearGradient id="pi212" x1="0" y1="0" x2="1" y2="1"><stop offset="0" stop-color="#fff"/><stop offset="1" stop-color="#d4e4f7"/></linearGradient></defs><rect x=".5" y=".5" width="8.500" height="9" fill="url(#pi212)" stroke="#111"/><rect x="1" y="1" width="7.500" height="1.600" fill="#1f6ff0"/><path d="M6.500 4.600L11.300 8.400L6.500 12.200Z" fill="#000"/></svg>
<svg style="left:798.5px;top:334.2px" width="13" height="13" viewBox="0 0 13 13"><defs><radialGradient id="rg341" cx=".4" cy=".35" r=".7"><stop offset="0" stop-color="#fff"/><stop offset="1" stop-color="#c9ccd0"/></radialGradient></defs><circle cx="6.5" cy="6.500" r="5.700" fill="url(#rg341)" stroke="#6f7478" stroke-width="1.100"/><circle cx="6.500" cy="6.500" r="4.600" fill="none" stroke="#fff" stroke-opacity=".6"/><circle cx="6.500" cy="6.500" r="3.200" fill="#0f3b68"/><circle cx="6.200" cy="6.200" r="1.900" fill="#249ad8"/><circle cx="5.600" cy="5.600" r=".8" fill="#9fdcf8"/></svg>
<svg style="left:798.5px;top:360.2px" width="13" height="13" viewBox="0 0 13 13"><defs><radialGradient id="rg367" cx=".4" cy=".35" r=".7"><stop offset="0" stop-color="#fff"/><stop offset="1" stop-color="#c9ccd0"/></radialGradient></defs><circle cx="6.5" cy="6.500" r="5.700" fill="url(#rg367)" stroke="#6f7478" stroke-width="1.100"/><circle cx="6.500" cy="6.500" r="4.600" fill="none" stroke="#fff" stroke-opacity=".6"/></svg>
<span class="t" style="left:815.2px;transform-origin:left center;top:334.0px;font-size:12px;color:#000;transform:scaleX(0.865);">Bottom ordinate</span>
<span class="t" style="left:815.2px;transform-origin:left center;top:360.0px;font-size:12px;color:#000;transform:scaleX(0.867);">Bottom installation level</span>
<span class="t" style="left:798.9px;transform-origin:left center;top:385.0px;font-size:12px;color:#000;transform:scaleX(0.874);">Additional flow</span>
<span class="t" style="left:815.2px;transform-origin:left center;top:425.0px;font-size:12px;color:#000;transform:scaleX(0.868);">Pressure downstream the box</span>
<div class="a" style="left:799px;top:425px;width:13px;height:13px;border:1px solid #8e8f8f;background:linear-gradient(135deg,#d6d9dc,#f1f1f1 60%,#fff);box-shadow:0 0 0 1px #f4f4f4 inset"></div>
<div class="a" style="left:1051px;top:388px;width:13px;height:13px;border:1px solid #8e8f8f;background:linear-gradient(135deg,#d6d9dc,#f1f1f1 60%,#fff);box-shadow:0 0 0 1px #f4f4f4 inset"></div>
<div class="inp" style="left:941px;top:330px;width:53px;height:20px"></div>
<div class="inp" style="left:941px;top:356px;width:53px;height:20px;background:#f0f0f0;border-color:#adb2b5"></div>
<div class="inp" style="left:941px;top:382px;width:53px;height:20px"></div>
<span class="t" style="right:288.2px;transform-origin:right center;top:333.0px;font-size:12px;color:#000;transform:scaleX(0.915);">213.40</span>
<span class="t" style="right:288.2px;transform-origin:right center;top:359.0px;font-size:12px;color:#6d6d6d;transform:scaleX(0.925);">0.70</span>
<span class="t" style="right:288.2px;transform-origin:right center;top:385.0px;font-size:12px;color:#000;transform:scaleX(0.886);">10.00</span>
<span class="t" style="left:997.9px;transform-origin:left center;top:333.0px;font-size:12px;color:#000;transform:scaleX(0.843);">m a.s.l.</span>
<span class="t" style="left:997.9px;transform-origin:left center;top:359.0px;font-size:12px;color:#000;transform:scaleX(0.760);">m</span>
<span class="t" style="left:997.9px;transform-origin:left center;top:385.0px;font-size:12px;color:#000;transform:scaleX(0.900);">m³/h</span>
<div class="btn" style="left:1074px;top:331px;width:178px;height:21px;"></div>
<span class="t" style="left:1106.9px;transform-origin:left center;top:335.0px;font-size:12px;color:#000;transform:scaleX(0.871);">Additional equipment</span>
<svg style="left:1239.5px;top:340.0px" width="7" height="4"><path d="M0 0H7L3.5 4Z" fill="#000"/></svg>
<div class="btn" style="left:1074px;top:357px;width:178px;height:21px;"></div>
<span class="t" style="left:1115.9px;transform-origin:left center;top:361.0px;font-size:12px;color:#000;transform:scaleX(0.867);">Gas parameters</span>
<svg style="left:1236px;top:361px" width="12" height="13" viewBox="0 0 12 13"><defs><linearGradient id="pi361" x1="0" y1="0" x2="1" y2="1"><stop offset="0" stop-color="#fff"/><stop offset="1" stop-color="#d4e4f7"/></linearGradient></defs><rect x=".5" y=".5" width="8.500" height="9" fill="url(#pi361)" stroke="#111"/><rect x="1" y="1" width="7.500" height="1.600" fill="#1f6ff0"/><path d="M6.500 4.600L11.300 8.400L6.500 12.200Z" fill="#000"/></svg>
<div class="btn" style="left:1074px;top:383px;width:178px;height:21px;border-color:#adb2b5;background:#f4f4f4;"></div>
<span class="t" style="left:1129.9px;transform-origin:left center;top:387.0px;font-size:12px;color:#838383;transform:scaleX(0.878);">Calculate flow</span>
<span class="t" style="left:798.9px;transform-origin:left center;top:485.0px;font-size:12px;color:#000;transform:scaleX(0.870);">Installation method</span>
<span class="t" style="left:798.9px;transform-origin:left center;top:511.0px;font-size:12px;color:#000;transform:scaleX(0.858);">Material</span>
<span class="t" style="left:798.9px;transform-origin:left center;top:559.0px;font-size:12px;color:#000;transform:scaleX(0.873);">Additional description</span>
<div class="btn" style="left:941px;top:481px;width:105px;height:21px;"></div>
<span class="t" style="left:944.9px;transform-origin:left center;top:485.0px;font-size:12px;color:#000;transform:scaleX(0.878);">Wall-mounted typ</span>
<svg style="left:1034.0px;top:490.0px" width="7" height="4"><path d="M0 0H7L3.5 4Z" fill="#000"/></svg>
<div class="btn" style="left:941px;top:507px;width:105px;height:21px;"></div>
<span class="t" style="left:944.9px;transform-origin:left center;top:511.0px;font-size:12px;color:#000;transform:scaleX(0.863);">Steel</span>
<svg style="left:1034.0px;top:516.0px" width="7" height="4"><path d="M0 0H7L3.5 4Z" fill="#000"/></svg>
<span class="t" style="left:1072.9px;transform-origin:left center;top:485.0px;font-size:12px;color:#000;transform:scaleX(0.900);">Width</span>
<span class="t" style="left:1072.9px;transform-origin:left center;top:511.0px;font-size:12px;color:#000;transform:scaleX(0.893);">Depth</span>
<span class="t" style="left:1072.9px;transform-origin:left center;top:535.0px;font-size:12px;color:#000;transform:scaleX(0.882);">Height</span>
<div class="inp" style="left:1156px;top:480px;width:53px;height:20px"></div>
<span class="t" style="right:73.2px;transform-origin:right center;top:483.0px;font-size:12px;color:#000;transform:scaleX(0.925);">90.0</span>
<span class="t" style="left:1212.9px;transform-origin:left center;top:483.0px;font-size:12px;color:#000;transform:scaleX(0.850);">cm</span>
<div class="inp" style="left:1156px;top:506px;width:53px;height:20px"></div>
<span class="t" style="right:73.2px;transform-origin:right center;top:509.0px;font-size:12px;color:#000;transform:scaleX(0.925);">30.0</span>
<span class="t" style="left:1212.9px;transform-origin:left center;top:509.0px;font-size:12px;color:#000;transform:scaleX(0.850);">cm</span>
<div class="inp" style="left:1156px;top:532px;width:53px;height:20px"></div>
<span class="t" style="right:73.2px;transform-origin:right center;top:535.0px;font-size:12px;color:#000;transform:scaleX(0.925);">60.0</span>
<span class="t" style="left:1212.9px;transform-origin:left center;top:535.0px;font-size:12px;color:#000;transform:scaleX(0.850);">cm</span>
<div class="inp" style="left:941px;top:556px;width:267px;height:20px"></div>
<div class="a" style="left:780px;top:585px;width:482px;height:2px;border-top:1px solid #a0a0a0;border-bottom:1px solid #fff"></div>
<div class="btn" style="left:918px;top:594px;width:99px;height:23px;"></div>
<span class="t" style="left:926.9px;transform-origin:left center;top:599.0px;font-size:12px;color:#000;transform:scaleX(0.884);">Save to template</span>
<div class="btn" style="left:1019px;top:594px;width:17px;height:23px;"></div>
<svg style="left:1024.0px;top:604.0px" width="7" height="4"><path d="M0 0H7L3.5 4Z" fill="#000"/></svg>
<div class="btn" style="left:1043px;top:594px;width:38px;height:23px;border-color:#adb2b5;background:#f4f4f4;"></div>
<svg style="left:1054px;top:599px" width="17" height="14" viewBox="0 0 17 14"><path d="M1.800 .6V8.700H9.300L6.600 6C9.800 3.500 13.200 5.800 12.600 9.200C12.200 11 11 12.600 9.500 13.600L10.800 13.800C14.500 11.500 17.200 7.800 15.800 4C14 .2 8.500 -.6 4.700 3.500Z" fill="#b3b3b3"/></svg>
<div class="btn" style="left:1089px;top:594px;width:78px;height:23px;border-color:#3c7fb1;box-shadow:0 0 0 1px #48d8fb inset;"></div>
<span class="t" style="left:1118.9px;transform-origin:left center;top:599.0px;font-size:12px;color:#000;transform:scaleX(0.957);">OK</span>
<div class="btn" style="left:1176px;top:594px;width:78px;height:23px;"></div>
<span class="t" style="left:1196.9px;transform-origin:left center;top:599.0px;font-size:12px;color:#000;transform:scaleX(0.900);">Cancel</span>
<span class="t" style="left:48.5px;top:666.0px;font-size:12px;letter-spacing:-0.95px;">ArCADia</span>
<span class="t" style="left:220.5px;top:667.0px;font-size:12px;letter-spacing:-0.34px;">No active tool</span>
<div class="a" style="left:135px;top:661px;width:1px;height:24px;border-left:1px dotted #9ab0cf"></div>
<span class="t" style="left:10.5px;top:695.0px;font-size:12px;letter-spacing:-0.34px;">Ready</span>
<span class="t" style="left:1133.5px;top:695.0px;font-size:12px;letter-spacing:-0.61px;color:#142c73;">54341.17,46979.06</span>
<svg style="left:1000px;top:688px" width="280" height="32" viewBox="1000 688 280 32"><defs>
<linearGradient id="sbb" x1="0" y1="0" x2="0" y2="1"><stop offset="0" stop-color="#e2edfb"/><stop offset=".45" stop-color="#cfe0f6"/><stop offset=".5" stop-color="#bed3ef"/><stop offset="1" stop-color="#dbe8f9"/></linearGradient>
<linearGradient id="sbo" x1="0" y1="0" x2="0" y2="1"><stop offset="0" stop-color="#fde1ae"/><stop offset=".4" stop-color="#fad08a"/><stop offset=".45" stop-color="#f3b13e"/><stop offset=".7" stop-color="#f6bf55"/><stop offset="1" stop-color="#fde6b4"/></linearGradient>
<linearGradient id="pgw" x1="0" y1="0" x2="0" y2="1"><stop offset="0" stop-color="#fff"/><stop offset="1" stop-color="#dfe9f6"/></linearGradient>
</defs>
<path d="M1004.500 692V711" stroke="#7f9ccb"/>
<rect x="1009.500" y="692.500" width="36.500" height="17.500" rx="3" fill="url(#sbb)" stroke="#7e9fce"/>
<rect x="1049.500" y="692.500" width="17.500" height="17.500" rx="3" fill="url(#sbb)" stroke="#7e9fce"/>
<rect x="1070.500" y="692.500" width="17.500" height="17.500" rx="3" fill="url(#sbb)" stroke="#7e9fce"/>
<rect x="1091.500" y="692.500" width="36.500" height="17.500" rx="3" fill="url(#sbo)" stroke="#e0a040"/>
<path d="M1027.500 693V710" stroke="#b3c9e8"/><path d="M1110.500 693V710" stroke="#e9b45c"/>
<!-- icon1 -->
<rect x="1016" y="696" width="10" height="10" fill="url(#pgw)"/><rect x="1016" y="696" width="10" height="1.500" fill="#4f8fe6"/>
<path d="M1015 695.500H1026M1025.500 695V705M1011.500 697V708M1011.500 702.500H1019M1011.500 705.500H1017M1011.500 708.500H1016.500M1016.500 695V698" stroke="#0e6b6b" fill="none" stroke-width=".8"/>
<path d="M1010 698.500L1011.500 695.500L1013 698.500Z" fill="#ff2a1a"/><rect x="1010" y="698" width="3" height="1.500" fill="#ffd21a"/>
<!-- icon2 3D -->
<rect x="1034" y="696" width="10" height="10" fill="url(#pgw)"/><rect x="1034" y="696" width="10" height="1.500" fill="#4f8fe6"/>
<path d="M1033 695.500H1045M1044.500 695V705M1034.500 695V698" stroke="#0e6b6b" fill="none" stroke-width=".8"/>
<text x="1028.800" y="708" font-family="Liberation Sans" font-weight="bold" font-size="8.500" fill="#0e6b6b" textLength="11.500" lengthAdjust="spacingAndGlyphs">3D</text>
<!-- icon3 -->
<path d="M1053.500 695V708M1061.500 695V708M1051 698.500H1065M1051 705.500H1065" stroke="#0e6b6b" fill="none" stroke-width=".8"/>
<path d="M1053.500 695.800L1056 698.500L1053.500 701.200L1051 698.500ZM1061.500 702.800L1064 705.500L1061.500 708.200L1059 705.500Z" fill="#ff3a20"/>
<!-- icon4 grid -->
<path d="M1075 695V708M1079.500 695V708M1084 695V708M1072.500 697.500H1086.500M1072.500 701.500H1086.500M1072.500 705.500H1086.500" stroke="#0e6b6b" fill="none" stroke-width=".8"/>
<!-- icon5 -->
<path d="M1094.500 703.500H1102.500V695L1094.500 703.500ZM1097.800 702H1101V698.500Z" fill="#f0572e" fill-rule="evenodd" stroke="#e8502a" stroke-width=".6"/>
<path d="M1093 705.500H1107M1100.500 705V709M1103.500 694V706" stroke="#0e6b6b" fill="none" stroke-width=".8"/>
<!-- icon6 LWT -->
<path d="M1112.500 700V705.500H1125.500V700" stroke="#0e6b6b" fill="none" stroke-width="1.200"/><path d="M1112 707H1127" stroke="#f4a58a" stroke-width="1"/>
<text x="1114.800" y="699.600" font-family="Liberation Sans" font-weight="bold" font-size="6" fill="#147a7a" textLength="12.500" lengthAdjust="spacingAndGlyphs">LWT</text>
<!-- grip -->
<g fill="#4f668e"><rect x="1269" y="701" width="2" height="2"/><rect x="1269" y="705" width="2" height="2"/><rect x="1269" y="709" width="2" height="2"/><rect x="1265" y="705" width="2" height="2"/><rect x="1265" y="709" width="2" height="2"/><rect x="1261" y="709" width="2" height="2"/></g>
</svg>
<div class="a" style="left:8px;top:688px;width:1264px;height:2px;border-top:1px solid #8c95a3;border-bottom:1px solid #fff"></div>
</body></html>
